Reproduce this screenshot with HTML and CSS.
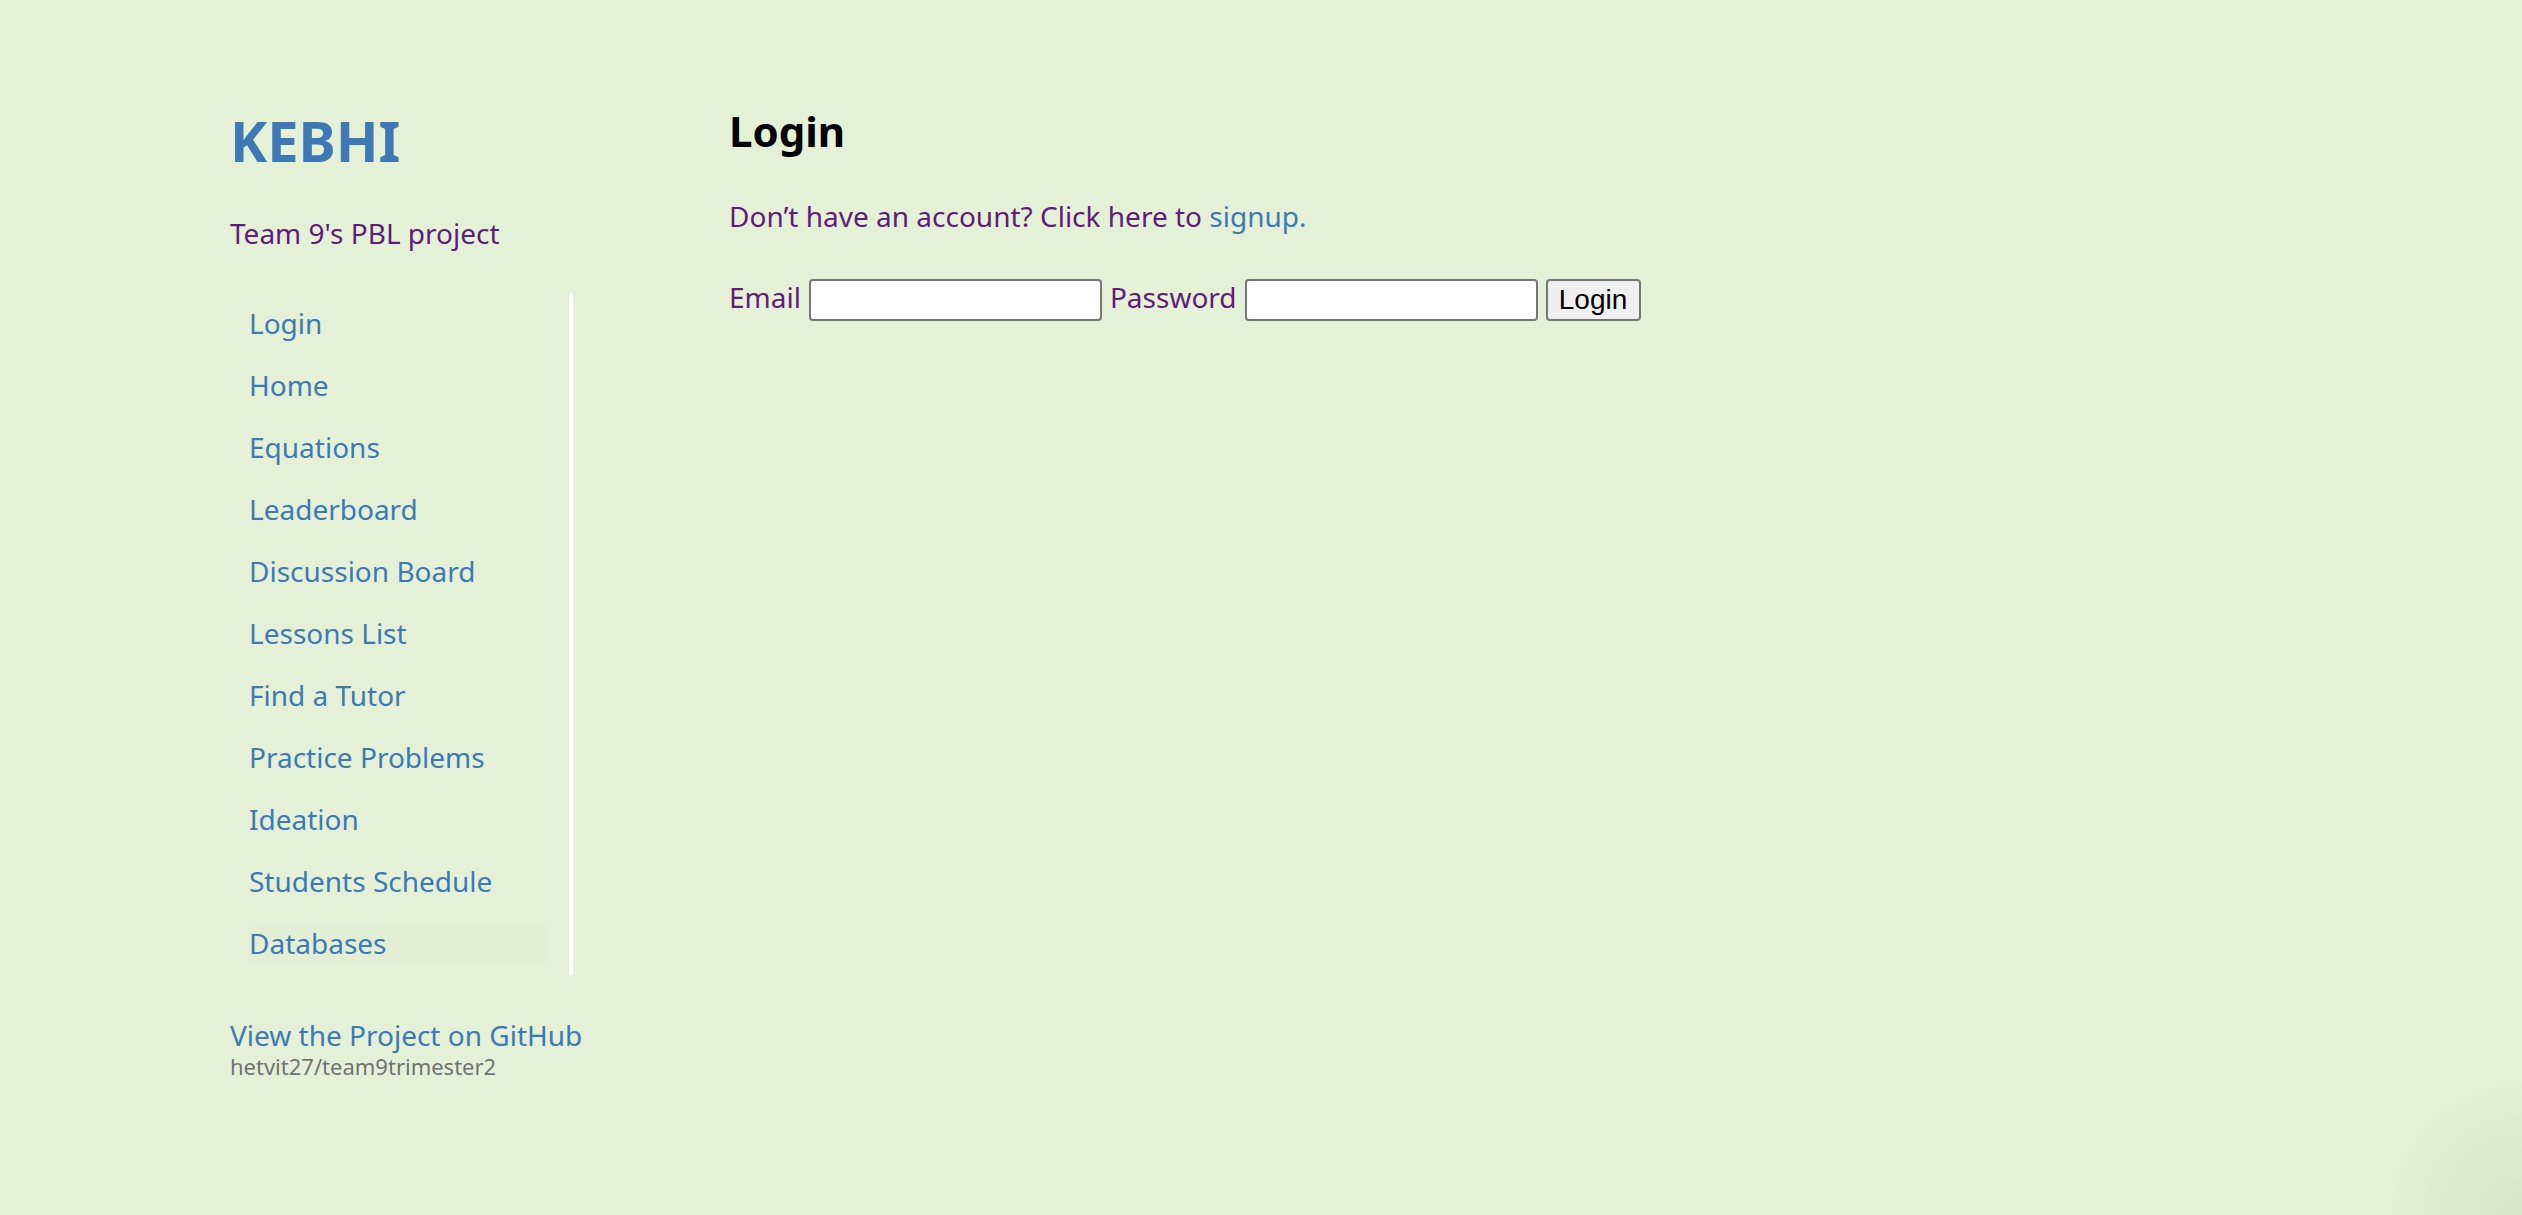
FILE: index.html
```html
<!DOCTYPE html>
<html lang="en">
<head>
<meta charset="utf-8">
<title>Login | KEBHI</title>
<link rel="stylesheet" href="styles.css">
</head>
<body>
<div class="wrapper">
  <header class="side">
    <h1 class="brand"><a href="#">KEBHI</a></h1>
    <p class="tagline">Team 9's PBL project</p>
    <ul class="nav">
      <li><a href="#">Login</a></li>
      <li><a href="#">Home</a></li>
      <li><a href="#">Equations</a></li>
      <li><a href="#">Leaderboard</a></li>
      <li><a href="#">Discussion Board</a></li>
      <li><a href="#">Lessons List</a></li>
      <li><a href="#">Find a Tutor</a></li>
      <li><a href="#">Practice Problems</a></li>
      <li><a href="#">Ideation</a></li>
      <li><a href="#">Students Schedule</a></li>
      <li class="is-hover"><a href="#">Databases</a></li>
    </ul>
    <p class="repo">
      <a class="repo-link" href="#">View the Project on GitHub</a>
      <small class="repo-name">hetvit27/team9trimester2</small>
    </p>
  </header>
  <main class="content">
    <h2 class="title">Login</h2>
    <p class="lead">Don’t have an account? Click here to <a href="#">signup.</a></p>
    <form class="login-form">
      <label class="field-label" for="email">Email</label>
      <input class="field" id="email" type="text">
      <label class="field-label" for="password">Password</label>
      <input class="field" id="password" type="password">
      <button class="btn" type="button">Login</button>
    </form>
  </main>
</div>
</body>
</html>
```

FILE: styles.css
```css
html {
  background: #e4f1d6;
}

body {
  margin: 0;
  min-height: 1215px;
  background:
    radial-gradient(circle at 100% 100%, rgba(200, 214, 186, 0.5) 0, rgba(228, 241, 214, 0) 140px),
    #e4f1d6;
  font-family: "Noto Sans", "Open Sans", sans-serif;
  font-size: 28px;
  line-height: 1.5;
  color: #5e1c7c;
}

a {
  color: #3e79b6;
  text-decoration: none;
}

.wrapper {
  display: flex;
  align-items: flex-start;
  padding-left: 230px;
}

.side {
  flex: none;
  width: 343px;
  padding-top: 108px;
}

.brand {
  margin: 0;
  font-size: 56px;
  font-weight: 700;
  line-height: 64px;
}

.brand a {
  color: #3e79b6;
}

.tagline {
  margin: 39px 0 0;
  line-height: 44px;
}

.nav {
  list-style: none;
  box-sizing: border-box;
  width: 343px;
  margin: 38px 0 0;
  padding: 0 20px 0 19px;
  border-right: 4px solid #ffffff;
}

.nav li {
  padding: 10px 0 11px;
}

.nav a {
  display: block;
  line-height: 41px;
}

.nav .is-hover a {
  background: rgba(0, 0, 0, 0.008);
}

.repo {
  margin: 42px 0 0;
}

.repo-link {
  display: block;
  white-space: nowrap;
  line-height: 36px;
}

.repo-name {
  display: block;
  font-size: 22px;
  line-height: 26px;
  color: #727272;
}

.content {
  margin-left: 156px;
  padding-top: 106px;
}

.title {
  margin: 0;
  font-size: 42px;
  font-weight: 700;
  line-height: 50px;
  color: #000000;
}

.lead {
  margin: 38px 0 0;
  line-height: 44px;
}

.login-form {
  display: flex;
  align-items: flex-start;
  gap: 8px;
  margin-top: 41px;
}

.field-label {
  line-height: 36px;
}

.field {
  box-sizing: border-box;
  width: 293px;
  height: 42px;
  margin: 0;
  padding: 2px 4px;
  border: 2px solid #767676;
  border-radius: 4px;
  background: #ffffff;
  font-family: "Liberation Sans", Arial, sans-serif;
  font-size: 28px;
}

.btn {
  box-sizing: border-box;
  width: 95px;
  height: 42px;
  margin: 0;
  padding: 0;
  border: 2px solid #767676;
  border-radius: 4px;
  background: #efefef;
  color: #000000;
  font-family: "Liberation Sans", Arial, sans-serif;
  font-size: 28px;
}
```
